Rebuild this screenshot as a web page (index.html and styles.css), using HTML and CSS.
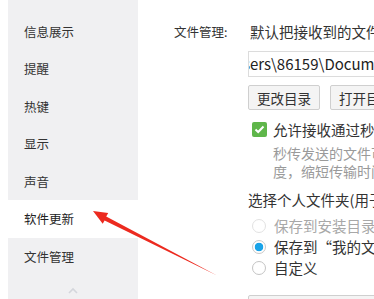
FILE: index.html
```html
<!DOCTYPE html>
<html lang="zh-CN">
<head>
<meta charset="utf-8">
<link rel="stylesheet" href="styles.css">
</head>
<body>
<div class="page">
  <nav class="sidebar">
    <div class="item">信息展示</div>
    <div class="item">提醒</div>
    <div class="item">热键</div>
    <div class="item">显示</div>
    <div class="item">声音</div>
    <div class="item active">软件更新</div>
    <div class="item">文件管理</div>
    <div class="more">
      <svg width="12" height="8" viewBox="0 0 12 8"><polyline points="2,6 6,2 10,6" fill="none" stroke="#d4d6dc" stroke-width="1.6"/></svg>
    </div>
  </nav>
  <main class="main">
    <div class="label">文件管理:</div>
    <div class="content">
      <div class="line1">默认把接收到的文件保存到此文件夹中</div>
      <div class="input"><span class="path">C:\Users\86159\Documents\Tencent Files</span></div>
      <div class="btns">
        <button class="btn">更改目录</button>
        <button class="btn">打开目录</button>
      </div>
      <div class="check">
        <span class="box"><svg width="11" height="9" viewBox="0 0 11 9"><polyline points="1.5,4.5 4.2,7 9.5,1.5" fill="none" stroke="#fff" stroke-width="2"/></svg></span>
        <span>允许接收通过秒传发送的文件</span>
      </div>
      <div class="hint">
        <div class="hint-line">秒传发送的文件可以提高传输速</div>
        <div class="hint-line">度，缩短传输时间</div>
      </div>
      <div class="title">选择个人文件夹(用于保存消息记录等数据)</div>
      <div class="radio disabled"><span class="dot"></span><span>保存到安装目录下</span></div>
      <div class="radio"><span class="dot on"></span><span>保存到“我的文档”</span></div>
      <div class="radio"><span class="dot"></span><span>自定义</span></div>
      <button class="btn wide">打开个人文件夹</button>
    </div>
  </main>
  <svg class="arrow" width="374" height="299" viewBox="0 0 374 299">
    <polygon points="93,211 102.7,223.7 104.6,220.4 217,275.5 106.2,216.4 108.2,213.1" fill="#ec2a1f"/>
  </svg>
</div>
</body>
</html>
```
FILE: styles.css
```css
* { box-sizing: border-box; }
html, body { margin: 0; padding: 0; background: #fff; }
body {
  font-family: "Noto Sans CJK SC", "Noto Sans", sans-serif;
  color: #333;
  width: 374px;
  height: 299px;
  overflow: hidden;
}
.page {
  position: relative;
  display: flex;
  width: 374px;
  height: 299px;
  overflow: hidden;
  padding-left: 8px;
}
.sidebar {
  width: 130px;
  flex: none;
  background: #f0f0f2;
  padding-top: 12.5px;
}
.item {
  height: 37.5px;
  line-height: 37.5px;
  padding-left: 16px;
  font-size: 12.5px;
  color: #333;
}
.item.active { background: #fff; color: #222; }
.more {
  display: flex;
  justify-content: center;
  padding-top: 12px;
}
.main {
  flex: 1;
  display: flex;
  padding-left: 36px;
  min-width: 0;
}
.label {
  width: 74px;
  flex: none;
  font-size: 12.5px;
  line-height: 20px;
  margin-top: 22px;
  color: #333;
}
.content {
  flex: 1;
  min-width: 0;
  overflow: hidden;
  white-space: nowrap;
  font-size: 14.5px;
}
.line1 {
  margin-top: 22px;
  line-height: 20px;
  padding-left: 2px;
}
.input {
  margin-top: 9px;
  height: 26px;
  border: 1px solid #dcdcdc;
  border-right: none;
  overflow: hidden;
  line-height: 24px;
  font-size: 15px;
  color: #222;
}
.path { display: inline-block; margin-left: -36px; }
.btns {
  margin-top: 8px;
  display: flex;
  gap: 10px;
}
.btn {
  font-family: inherit;
  flex: none;
  height: 25px;
  width: 72px;
  padding: 0;
  border: 1px solid #cfcfcf;
  border-radius: 2px;
  background: #f4f4f4;
  font-size: 13.5px;
  color: #333;
}
.btn.wide { width: 140px; margin-top: 17px; text-align: left; padding-left: 12px; }
.check {
  margin-top: 10px;
  height: 18px;
  display: flex;
  align-items: center;
  gap: 6px;
  padding-left: 4px;
}
.box {
  width: 15px;
  height: 15px;
  flex: none;
  border-radius: 2px;
  background: #5fb64a;
  display: flex;
  align-items: center;
  justify-content: center;
}
.hint {
  margin-top: 6px;
  padding-left: 25px;
  color: #9a9a9a;
  font-size: 14px;
}
.hint-line {
  height: 18px;
  line-height: 18px;
}
.title {
  margin-top: 10px;
  line-height: 20px;
}
.radio {
  height: 21px;
  display: flex;
  align-items: center;
  gap: 8px;
  padding-left: 4px;
}
.title + .radio { margin-top: 5px; }
.radio.disabled { color: #a8a8a8; }
.dot {
  width: 14px;
  height: 14px;
  flex: none;
  border-radius: 50%;
  border: 1px solid #c4c4c4;
  background: #fff;
}
.radio.disabled .dot { border-color: #e2e2e2; }
.dot.on {
  border-color: #c8c8c8;
  background: radial-gradient(circle, #1aa3e8 0 4px, #fff 4.6px);
}
.arrow {
  position: absolute;
  left: 0;
  top: 0;
  pointer-events: none;
}
```
